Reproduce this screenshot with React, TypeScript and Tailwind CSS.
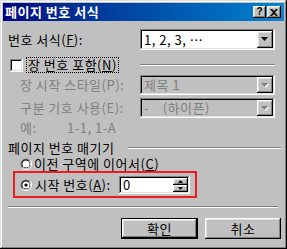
import React from "react";

const raised =
  "shadow-[inset_-1px_-1px_#000,inset_1px_1px_#fff,inset_-2px_-2px_#808080,inset_2px_2px_#dfdfdf]";
const sunken =
  "shadow-[inset_-1px_-1px_#fff,inset_1px_1px_#808080,inset_-2px_-2px_#dfdfdf,inset_2px_2px_#000]";

function Arrow({ disabled }: { disabled?: boolean }) {
  return (
    <svg width="8" height="5" viewBox="0 0 8 5">
      {disabled ? (
        <>
          <polygon points="1,1 8,1 4.5,5" fill="#fff" />
          <polygon points="0,0 7,0 3.5,4" fill="#808080" />
        </>
      ) : (
        <polygon points="0,0 7,0 3.5,4" fill="#000" />
      )}
    </svg>
  );
}

function Combo({ text, disabled, tall }: { text: string; disabled?: boolean; tall?: boolean }) {
  return (
    <div
      className={`w-[135px] ${tall ? "h-[21px]" : "h-[20px]"} mr-[6px] p-[2px] flex items-center ${sunken} ${
        disabled ? "bg-[#c0c0c0] text-[#808080]" : "bg-white text-black"
      }`}
    >
      <span className="flex-1 pl-[2px] whitespace-pre">{text}</span>
      <div className={`w-[16px] h-full flex items-center justify-center bg-[#c0c0c0] ${raised}`}>
        <Arrow disabled={disabled} />
      </div>
    </div>
  );
}

function Radio({ checked }: { checked?: boolean }) {
  return (
    <svg width="12" height="12" viewBox="0 0 12 12" className="shrink-0">
      <circle cx="6" cy="6" r="5.5" fill="#808080" />
      <path d="M2 10 A5.5 5.5 0 0 0 10 2" stroke="#fff" strokeWidth="1" fill="none" />
      <circle cx="6" cy="6" r="4.5" fill="#000" />
      <path d="M2.8 9.2 A4.5 4.5 0 0 0 9.2 2.8" stroke="#dfdfdf" strokeWidth="1" fill="none" />
      <circle cx="6" cy="6" r="3.6" fill="#fff" />
      {checked && <circle cx="6" cy="6" r="1.6" fill="#000" />}
    </svg>
  );
}

function Etch({ className }: { className: string }) {
  return <div className={`h-[2px] border-t border-[#808080] border-b border-b-white ${className}`} />;
}

export default function App() {
  return (
    <div className="w-[287px] h-[249px] p-[3px] bg-[#c0c0c0] text-[13px] leading-[14px] tracking-[0.5px] text-black font-['Noto_Sans_CJK_KR','Noto_Sans',sans-serif] shadow-[inset_-1px_-1px_#000,inset_1px_1px_#dfdfdf,inset_-2px_-2px_#808080,inset_2px_2px_#fff]">
      {/* title bar */}
      <div className="h-[18px] flex items-center pl-[2px] pr-[3px] bg-linear-to-r from-[#000080] to-[#1084d0]">
        <span className="flex-1 text-white font-bold text-[13px]">페이지 번호 서식</span>
        <div className={`w-[13px] h-[12px] mr-[1px] bg-[#c0c0c0] flex items-center justify-center ${raised}`}>
          <span className="font-['Liberation_Sans',sans-serif] font-bold text-[10px] leading-none tracking-normal">?</span>
        </div>
        <div className={`w-[14px] h-[12px] bg-[#c0c0c0] flex items-center justify-center ${raised}`}>
          <svg width="8" height="7" viewBox="0 0 8 7">
            <path d="M0 0h2l2 2 2-2h2L5 3.5 8 7H6L4 5 2 7H0l3-3.5z" fill="#000" />
          </svg>
        </div>
      </div>

      <div className="pl-[5px] pr-[3px]">
        {/* 번호 서식 */}
        <div className="mt-[8px] flex items-center justify-between">
          <span>
            번호 서식(<u>F</u>):
          </span>
          <Combo text="1, 2, 3, …" tall />
        </div>

        {/* 장 번호 포함 */}
        <div className="mt-[8px] h-[14px] flex items-center">
          <div className={`ml-[2px] w-[13px] h-[13px] bg-white ${sunken}`} />
          <span className="ml-[4px] px-[1px] outline outline-1 outline-dotted outline-black">
            장 번호 포함(<u>N</u>)
          </span>
          <Etch className="ml-auto w-[135px] mr-[6px]" />
        </div>

        <div className="mt-[3px] flex items-center justify-between text-[#808080]">
          <span className="pl-[12px]">장 시작 스타일(P):</span>
          <Combo text="제목 1" disabled />
        </div>

        <div className="mt-[3px] flex items-center justify-between text-[#808080]">
          <span className="pl-[12px]">구분 기호 사용(E):</span>
          <Combo text="-    (하이픈)" disabled />
        </div>

        <div className="mt-[2px] h-[16px] flex items-center text-[#808080]">
          <span className="pl-[12px] w-[59px]">예:</span>
          <span>1-1, 1-A</span>
        </div>

        {/* 페이지 번호 매기기 */}
        <div className="mt-[4px] h-[16px] flex items-center">
          <span>페이지 번호 매기기</span>
          <Etch className="ml-auto w-[153px]" />
        </div>

        <div className="mt-[1px] h-[14px] flex items-center pl-[12px]">
          <Radio />
          <span className="ml-[2px]">
            이전 구역에 이어서(<u>C</u>)
          </span>
        </div>

        <div className="ml-[5px] w-[184px] h-[27px] border-2 border-[#ee1c1c] flex items-center pl-[5px] pr-[5px]">
          <Radio checked />
          <span className="ml-[3px]">
            시작 번호(<u>A</u>):
          </span>
          <div className={`ml-auto w-[71px] h-[18px] p-[2px] flex items-center bg-white ${sunken}`}>
            <span className="flex-1 pl-[2px]">0</span>
            <div className="w-[15px] h-full flex flex-col">
              <div className={`flex-1 flex items-center justify-center bg-[#c0c0c0] ${raised}`}>
                <svg width="5" height="3" viewBox="0 0 5 3">
                  <polygon points="2.5,0 5,3 0,3" fill="#000" />
                </svg>
              </div>
              <div className={`flex-1 flex items-center justify-center bg-[#c0c0c0] ${raised}`}>
                <svg width="5" height="3" viewBox="0 0 5 3">
                  <polygon points="0,0 5,0 2.5,3" fill="#000" />
                </svg>
              </div>
            </div>
          </div>
        </div>

        <Etch className="mt-[8px] w-[270px]" />

        <div className="mt-[10px] flex justify-end gap-[7px]">
          <div className="w-[77px] h-[21px] border border-black">
            <div className={`w-full h-full flex items-center justify-center bg-[#c0c0c0] ${raised}`}>확인</div>
          </div>
          <div className={`w-[76px] h-[21px] flex items-center justify-center bg-[#c0c0c0] ${raised}`}>취소</div>
        </div>
      </div>
    </div>
  );
}
